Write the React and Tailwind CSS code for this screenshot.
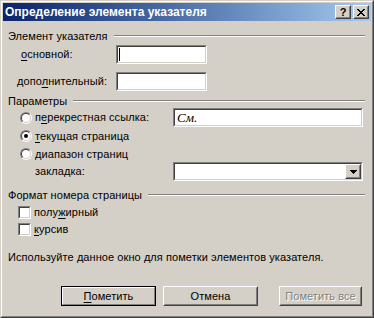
import React from "react";

const font = { fontFamily: '"Liberation Sans", Arial, sans-serif' };

function U({ children }) {
  return <span className="underline underline-offset-[2px] decoration-1">{children}</span>;
}

function Etched({ label, gap }) {
  return (
    <div className="h-[14px] flex items-center">
      <span className="whitespace-nowrap leading-none">{label}</span>
      <div className={"flex-1 h-[2px] border-t border-b border-t-[#808080] border-b-white " + gap}></div>
    </div>
  );
}

function TextBox({ w, caret, children }) {
  return (
    <div className={"h-[19px] flex border border-t-[#808080] border-l-[#808080] border-r-white border-b-white " + w}>
      <div className="flex-1 flex items-center bg-white border border-t-[#404040] border-l-[#404040] border-r-[#d4d0c8] border-b-[#d4d0c8]">
        {caret ? <div className="w-px h-[13px] bg-black ml-px"></div> : null}
        {children}
      </div>
    </div>
  );
}

function Radio({ checked }) {
  return (
    <div className="w-[12px] h-[12px] flex rounded-full border border-t-[#808080] border-l-[#808080] border-r-white border-b-white">
      <div className="flex-1 flex items-center justify-center rounded-full bg-white border border-t-[#404040] border-l-[#404040] border-r-[#d4d0c8] border-b-[#d4d0c8]">
        {checked ? <div className="w-[4px] h-[4px] rounded-full bg-black"></div> : null}
      </div>
    </div>
  );
}

function Check() {
  return (
    <div className="w-[13px] h-[13px] flex border border-t-[#808080] border-l-[#808080] border-r-white border-b-white">
      <div className="flex-1 bg-white border border-t-[#404040] border-l-[#404040] border-r-[#d4d0c8] border-b-[#d4d0c8]"></div>
    </div>
  );
}

function Raised({ className, children }) {
  return (
    <div className={"flex border border-t-white border-l-white border-r-[#404040] border-b-[#404040] " + className}>
      <div className="flex-1 flex items-center justify-center border border-t-[#d4d0c8] border-l-[#d4d0c8] border-r-[#808080] border-b-[#808080] bg-[#d4d0c8]">
        {children}
      </div>
    </div>
  );
}

export default function App() {
  return (
    <div className="w-[374px] h-[318px] bg-[#d4d0c8] text-black" style={font}>
      <div className="w-[374px] h-[318px] flex border border-t-[#d4d0c8] border-l-[#d4d0c8] border-r-[#404040] border-b-[#404040]">
        <div className="flex-1 flex flex-col p-px border border-t-white border-l-white border-r-[#808080] border-b-[#808080]">
          {/* Title bar */}
          <div className="h-[18px] flex items-center bg-gradient-to-r from-[#0a246a] to-[#a6caf0] pl-[2px] pr-[2px]">
            <span className="text-white font-bold text-[12px] leading-none whitespace-nowrap">
              Определение элемента указателя
            </span>
            <div className="ml-auto flex gap-[2px]">
              <Raised className="w-[16px] h-[14px]">
                <span className="font-bold text-[11px] leading-none text-black">?</span>
              </Raised>
              <Raised className="w-[16px] h-[14px]">
                <svg width="8" height="7" viewBox="0 0 8 7" shapeRendering="crispEdges">
                  <path d="M0 0h2v1h-2zM6 0h2v1h-2zM1 1h2v1h-2zM5 1h2v1h-2zM2 2h4v1h-4zM3 3h2v1h-2zM2 4h4v1h-4zM1 5h2v1h-2zM5 5h2v1h-2zM0 6h2v1h-2zM6 6h2v1h-2z" fill="#000" />
                </svg>
              </Raised>
            </div>
          </div>

          {/* Body */}
          <div className="flex flex-col pl-[5px] pr-[6px] text-[11px] leading-none tracking-[0.07px]">
            <div className="mt-[8px]">
              <Etched label="Элемент указателя" gap="ml-[6px]" />
            </div>

            <div className="mt-[2px] h-[19px] flex items-center">
              <div className="w-[108px] pl-[13px]"><U>о</U>сновной:</div>
              <TextBox w="w-[91px]" caret />
            </div>

            <div className="mt-[8px] h-[19px] flex items-center">
              <div className="w-[108px] pl-[9px]">допо<U>л</U>нительный:</div>
              <TextBox w="w-[91px]" />
            </div>

            <div className="mt-[3px]">
              <Etched label="Параметры" gap="ml-[6px]" />
            </div>

            <div className="h-[19px] flex items-center">
              <div className="w-[165px] pl-[12px] flex items-center">
                <Radio />
                <span className="ml-[3px]">п<U>е</U>рекрестная ссылка:</span>
              </div>
              <TextBox w="w-[190px]">
                <span className="ml-[2px] italic text-[13px] leading-none" style={{ fontFamily: '"Liberation Serif", serif' }}>См.</span>
              </TextBox>
            </div>

            <div className="mt-[2px] h-[14px] flex items-center pl-[12px]">
              <Radio checked />
              <span className="ml-[3px]"><U>т</U>екущая страница</span>
            </div>

            <div className="mt-[4px] h-[14px] flex items-center pl-[12px]">
              <Radio />
              <span className="ml-[3px]"><U>д</U>иапазон страниц</span>
            </div>

            <div className="mt-[1px] h-[19px] flex items-center">
              <div className="w-[165px] pl-[27px]">закладка:</div>
              <div className="w-[190px] h-[19px] flex border border-t-[#808080] border-l-[#808080] border-r-white border-b-white">
                <div className="flex-1 flex justify-end bg-white border border-t-[#404040] border-l-[#404040] border-r-[#d4d0c8] border-b-[#d4d0c8]">
                  <Raised className="w-[16px] h-full">
                    <svg width="7" height="4" viewBox="0 0 7 4" shapeRendering="crispEdges">
                      <path d="M0 0h7v1h-7zM1 1h5v1h-5zM2 2h3v1h-3zM3 3h1v1h-1z" fill="#000" />
                    </svg>
                  </Raised>
                </div>
              </div>
            </div>

            <div className="mt-[7px]">
              <Etched label="Формат номера страницы" gap="ml-[6px]" />
            </div>

            <div className="mt-[4px] h-[13px] flex items-center pl-[10px]">
              <Check />
              <span className="ml-[3px]">полу<U>ж</U>ирный</span>
            </div>

            <div className="mt-[4px] h-[13px] flex items-center pl-[10px]">
              <Check />
              <span className="ml-[3px]"><U>к</U>урсив</span>
            </div>

            <div className="mt-[14px] h-[14px] flex items-center whitespace-nowrap">
              Используйте данное окно для пометки элементов указателя.
            </div>

            <div className="mt-[22px] h-[20px] flex">
              <div className="ml-[53px] w-[95px] h-[20px] flex border border-black">
                <div className="flex-1 flex items-center justify-center border border-t-white border-l-white border-r-[#808080] border-b-[#808080]">
                  <span><U>П</U>ометить</span>
                </div>
              </div>
              <Raised className="ml-[7px] w-[95px] h-[20px]">
                <span>Отмена</span>
              </Raised>
              <Raised className="ml-[21px] w-[83px] h-[20px]">
                <span className="text-[#808080] [text-shadow:1px_1px_0_#ffffff]">Пометить все</span>
              </Raised>
            </div>
          </div>
        </div>
      </div>
    </div>
  );
}
